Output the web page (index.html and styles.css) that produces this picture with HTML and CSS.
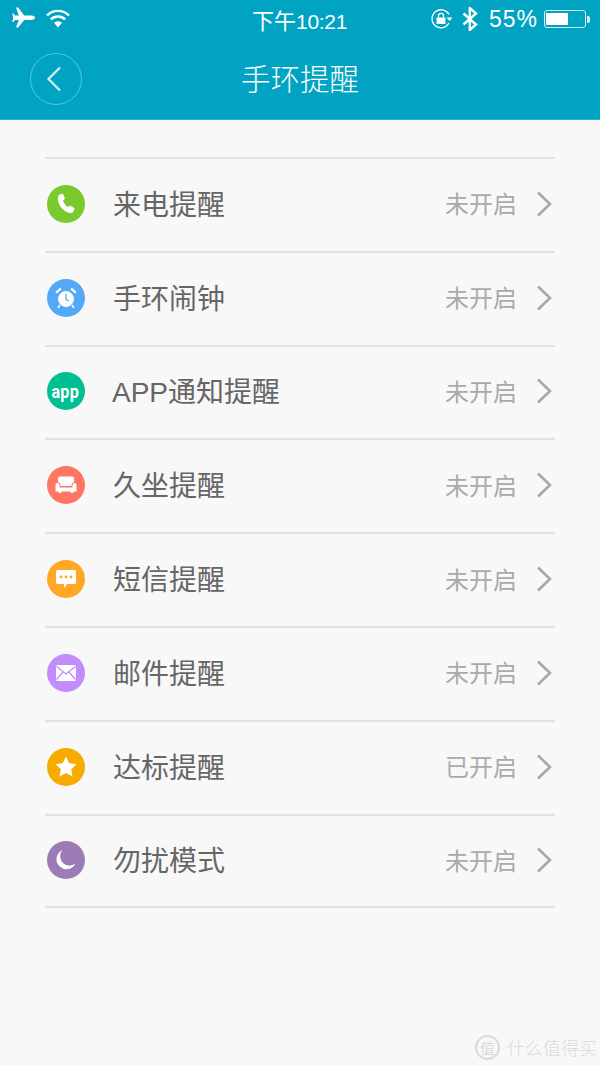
FILE: index.html
```html
<!DOCTYPE html>
<html lang="zh-CN">
  <head>
    <meta charset="UTF-8" />
    <meta name="viewport" content="width=device-width, initial-scale=1.0" />
    <title>手环提醒</title>
    <link rel="stylesheet" href="styles.css">
  </head>
  <body>
    <header class="top">
      <div class="status">
        <div class="status-left">
          <svg class="ic-plane" width="24" height="22" viewBox="0 0 24 22"><path d="M4 0.500h2.200l6 8h7.300c2 0 3.500 1 3.500 2.200s-1.500 2.300-3.500 2.300h-7.300l-6 7.500H4l2.800-7.500H3L1.400 15H0.300l0.900-4.300L0.300 6.500h1.100L3 8.500h3.800z" fill="#fff"/></svg>
          <svg class="ic-wifi" width="24" height="19" viewBox="0 0 24 19"><g fill="none" stroke="#fff" stroke-width="2.400"><path d="M1 6.500a15.500 15.500 0 0 1 22 0"/><path d="M4.800 10.300a10.500 10.500 0 0 1 14.400 0"/></g><path d="M8 13.800a6 6 0 0 1 8 0L12 18.500z" fill="#fff"/></svg>
        </div>
        <div class="clock">下午<span class="digits">10:21</span></div>
        <div class="status-right">
          <svg class="ic-lock" width="22" height="20" viewBox="0 0 22 20"><path d="M18 5.500A9 9 0 1 0 18 14" fill="none" stroke="#fff" stroke-width="1.300"/><path d="M15.500 8.500h6L18.500 12z" fill="#fff"/><rect x="5.500" y="8.500" width="9" height="6.500" rx="0.800" fill="#fff"/><path d="M7.500 8.500V6.800a2.500 2.500 0 0 1 5 0v1.700" fill="none" stroke="#fff" stroke-width="1.300"/></svg>
          <svg class="ic-bt" width="16" height="24" viewBox="0 0 16 24"><path d="M1.500 6.500L14 17.500 7.800 23V1L14 6.500 1.500 17.500" fill="none" stroke="#fff" stroke-width="2.400"/></svg>
          <span class="pct">55%</span>
          <div class="battery"><div class="battery-fill"></div></div>
          <div class="battery-tip"></div>
        </div>
      </div>
      <div class="titlebar">
        <div class="back">
          <svg width="16" height="26" viewBox="0 0 16 26"><path d="M14 1.500L2.500 13 14 24.500" fill="none" stroke="#d5eef4" stroke-width="2.200"/></svg>
        </div>
        <h1 class="title">手环提醒</h1>
      </div>
    </header>

    <ul class="list">
      <li class="row">
        <span class="icon green">
          <svg width="20" height="22" viewBox="0 0 20 22"><path d="M3.500 1.500L7 .8l2 5-2 1.700c.8 2.700 2.500 5 5 6.500l2-1.500 4.500 2.800-1 3.200c-1 1.500-3 2-5 1.200C6.500 17.500 2.500 12.500 1.800 6c-.2-2 .5-3.500 1.700-4.500z" fill="#fff"/></svg>
        </span>
        <span class="name">来电提醒</span>
        <span class="state">未开启</span>
        <svg class="arrow" width="16" height="26" viewBox="0 0 16 26"><path d="M2 1.500L14 13 2 24.500" fill="none" stroke="#a8a8a8" stroke-width="2.600"/></svg>
      </li>
      <li class="row">
        <span class="icon blue">
          <svg width="24" height="24" viewBox="0 0 24 24"><circle cx="12" cy="13" r="7.500" fill="#fff" stroke="#fff"/><path d="M12 8v5.500l3 1.500" fill="none" stroke="#53a9f5" stroke-width="1.300"/><path d="M1.500 6L6 1.800l1.600 1.400-4.500 4.300zM22.500 6L18 1.800l-1.600 1.400 4.500 4.300z" fill="#fff"/><path d="M6 19l-2 3M18 19l2 3" stroke="#fff" stroke-width="1.500"/></svg>
        </span>
        <span class="name">手环闹钟</span>
        <span class="state">未开启</span>
        <svg class="arrow" width="16" height="26" viewBox="0 0 16 26"><path d="M2 1.500L14 13 2 24.500" fill="none" stroke="#a8a8a8" stroke-width="2.600"/></svg>
      </li>
      <li class="row">
        <span class="icon teal"><span class="app">app</span></span>
        <span class="name name-app">APP通知提醒</span>
        <span class="state">未开启</span>
        <svg class="arrow" width="16" height="26" viewBox="0 0 16 26"><path d="M2 1.500L14 13 2 24.500" fill="none" stroke="#a8a8a8" stroke-width="2.600"/></svg>
      </li>
      <li class="row">
        <span class="icon coral">
          <svg width="22" height="20" viewBox="0 0 22 20"><path d="M5 1.500h12a2 2 0 0 1 2 2V7a3 3 0 0 0-2.500 3v1h-11v-1A3 3 0 0 0 3 7V3.500a2 2 0 0 1 2-2z" fill="#fff"/><path d="M2.500 8a2 2 0 0 1 2 2v2.500h13V10a2 2 0 0 1 4 0v6.500H18.500l-.5 1.500h-2l-.5-1.500h-9L6 18H4l-.5-1.500H.5V10a2 2 0 0 1 2-2z" fill="#fff"/></svg>
        </span>
        <span class="name">久坐提醒</span>
        <span class="state">未开启</span>
        <svg class="arrow" width="16" height="26" viewBox="0 0 16 26"><path d="M2 1.500L14 13 2 24.500" fill="none" stroke="#a8a8a8" stroke-width="2.600"/></svg>
      </li>
      <li class="row">
        <span class="icon orange">
          <svg width="22" height="20" viewBox="0 0 22 20"><path d="M2.500 1h17A1.500 1.500 0 0 1 21 2.500v11a1.500 1.500 0 0 1-1.500 1.500H12l-3 4v-4H2.500A1.500 1.500 0 0 1 1 13.500v-11A1.500 1.500 0 0 1 2.500 1z" fill="#fff"/><circle cx="6" cy="8" r="1.400" fill="#ffa726"/><circle cx="11" cy="8" r="1.400" fill="#ffa726"/><circle cx="16" cy="8" r="1.400" fill="#ffa726"/></svg>
        </span>
        <span class="name">短信提醒</span>
        <span class="state">未开启</span>
        <svg class="arrow" width="16" height="26" viewBox="0 0 16 26"><path d="M2 1.500L14 13 2 24.500" fill="none" stroke="#a8a8a8" stroke-width="2.600"/></svg>
      </li>
      <li class="row">
        <span class="icon purple">
          <svg width="20" height="16" viewBox="0 0 20 16"><rect width="20" height="16" rx="1.500" fill="#fff"/><path d="M.5 1.500L10 9l9.500-7.500M.5 14.500L7 7M19.500 14.500L13 7" fill="none" stroke="#c28cfc" stroke-width="1.300"/></svg>
        </span>
        <span class="name">邮件提醒</span>
        <span class="state">未开启</span>
        <svg class="arrow" width="16" height="26" viewBox="0 0 16 26"><path d="M2 1.500L14 13 2 24.500" fill="none" stroke="#a8a8a8" stroke-width="2.600"/></svg>
      </li>
      <li class="row">
        <span class="icon amber">
          <svg width="22" height="21" viewBox="0 0 22 21"><path d="M11 .5l3.200 6.700 7.300 1-5.300 5.100 1.300 7.200L11 17l-6.500 3.500 1.300-7.200L.5 8.200l7.300-1z" fill="#fff"/></svg>
        </span>
        <span class="name">达标提醒</span>
        <span class="state">已开启</span>
        <svg class="arrow" width="16" height="26" viewBox="0 0 16 26"><path d="M2 1.500L14 13 2 24.500" fill="none" stroke="#a8a8a8" stroke-width="2.600"/></svg>
      </li>
      <li class="row">
        <span class="icon violet">
          <svg width="22" height="22" viewBox="0 0 22 22"><path d="M7.500 1A10 10 0 1 0 20.500 14.500 9.400 9.400 0 0 1 7.500 1z" fill="#fff"/></svg>
        </span>
        <span class="name">勿扰模式</span>
        <span class="state">未开启</span>
        <svg class="arrow" width="16" height="26" viewBox="0 0 16 26"><path d="M2 1.500L14 13 2 24.500" fill="none" stroke="#a8a8a8" stroke-width="2.600"/></svg>
      </li>
    </ul>

    <div class="mark">
      <span class="mark-logo">值</span>
      <span class="mark-text">什么值得买</span>
    </div>
  </body>
</html>
```

FILE: styles.css
```css
* {
  margin: 0;
  padding: 0;
  box-sizing: border-box;
}
body {
  width: 600px;
  height: 1065px;
  overflow: hidden;
  position: relative;
  background-color: #f8f8f8;
  font-family: "Noto Sans CJK SC", "Liberation Sans", sans-serif;
}
.top {
  height: 120px;
  background-color: #00a4c2;
  border-bottom: 1px solid #2db5cf;
  color: #fff;
}
.status {
  height: 40px;
  padding: 0 10px 0 12px;
  display: flex;
  align-items: center;
  position: relative;
}
.status-left {
  display: flex;
  align-items: center;
  gap: 10px;
  margin-top: -4px;
}
.clock {
  position: absolute;
  left: 252px;
  top: 3px;
  font-size: 22px;
  line-height: 32px;
}
.digits {
  font-family: "Liberation Sans", sans-serif;
  font-size: 21px;
  letter-spacing: -0.3px;
}
.status-right {
  margin-left: auto;
  display: flex;
  align-items: center;
  margin-top: -2px;
}
.ic-lock {
  margin-right: 9px;
}
.ic-bt {
  margin-right: 11px;
}
.pct {
  font-family: "Liberation Sans", sans-serif;
  font-size: 23px;
  letter-spacing: 1px;
  margin-right: 6px;
}
.battery {
  width: 42px;
  height: 18px;
  border: 1px solid #d5eef4;
  border-radius: 3px;
  padding: 2px 1px;
}
.battery-fill {
  width: 22px;
  height: 12px;
  background-color: #fff;
}
.battery-tip {
  width: 3px;
  height: 7px;
  margin-left: 1px;
  background-color: #d5eef4;
  border-radius: 0 2px 2px 0;
}
.titlebar {
  height: 80px;
  padding-left: 30px;
  display: flex;
  align-items: center;
  position: relative;
}
.back {
  width: 52px;
  height: 52px;
  margin-top: -3px;
  border: 1px solid rgba(255, 255, 255, 0.35);
  border-radius: 50%;
  display: flex;
  align-items: center;
  justify-content: center;
  padding-right: 4px;
}
.title {
  position: absolute;
  left: 0;
  right: 0;
  top: 15px;
  text-align: center;
  font-size: 29.5px;
  line-height: 44px;
  font-weight: 300;
}
.list {
  list-style: none;
  margin: 37px 45px 0;
  border-top: 2px solid #e2e2e2;
}
.row {
  height: 93.8px;
  border-bottom: 2px solid #e2e2e2;
  display: flex;
  align-items: center;
  padding: 0 3px 2px 0;
}
/* the last row is a little shorter in the design */
.row:last-child {
  height: 92.8px;
  padding-bottom: 1px;
}
.icon {
  flex: 0 0 38px;
  height: 38px;
  margin-left: 1.5px;
  border-radius: 50%;
  display: flex;
  align-items: center;
  justify-content: center;
}
.green { background-color: #7ac92e; }
.blue { background-color: #53a9f5; }
.teal { background-color: #00bf93; }
.coral { background-color: #ff7663; }
.orange { background-color: #ffa726; }
.purple { background-color: #c28cfc; }
.amber { background-color: #f5ab00; }
.violet { background-color: #9b7cb6; }
.app {
  color: #fff;
  font-family: "Roboto", sans-serif;
  font-size: 19px;
  font-weight: 700;
  line-height: 1;
  letter-spacing: 0.3px;
  transform: scaleX(0.85);
}
.name {
  margin: 0 0 2px 28.5px;
  font-size: 28px;
  line-height: 40px;
  color: #666;
}
.name-app {
  margin: 3px 0 0 27.5px;
  font-family: "Liberation Sans", "Noto Sans CJK SC", sans-serif;
}
.state {
  margin: 0 19px 2px auto;
  font-size: 24px;
  color: #aaa;
}
.arrow {
  flex-shrink: 0;
}
.mark {
  position: absolute;
  left: 475px;
  top: 1035px;
  display: flex;
  align-items: center;
  gap: 7px;
  opacity: 0.28;
  color: #8c8c8c;
}
.mark-logo {
  width: 25px;
  height: 25px;
  border: 2px solid #8c8c8c;
  border-radius: 50%;
  font-size: 15px;
  line-height: 21px;
  text-align: center;
}
.mark-text {
  font-size: 18px;
  line-height: 25px;
  font-weight: 300;
}
```
